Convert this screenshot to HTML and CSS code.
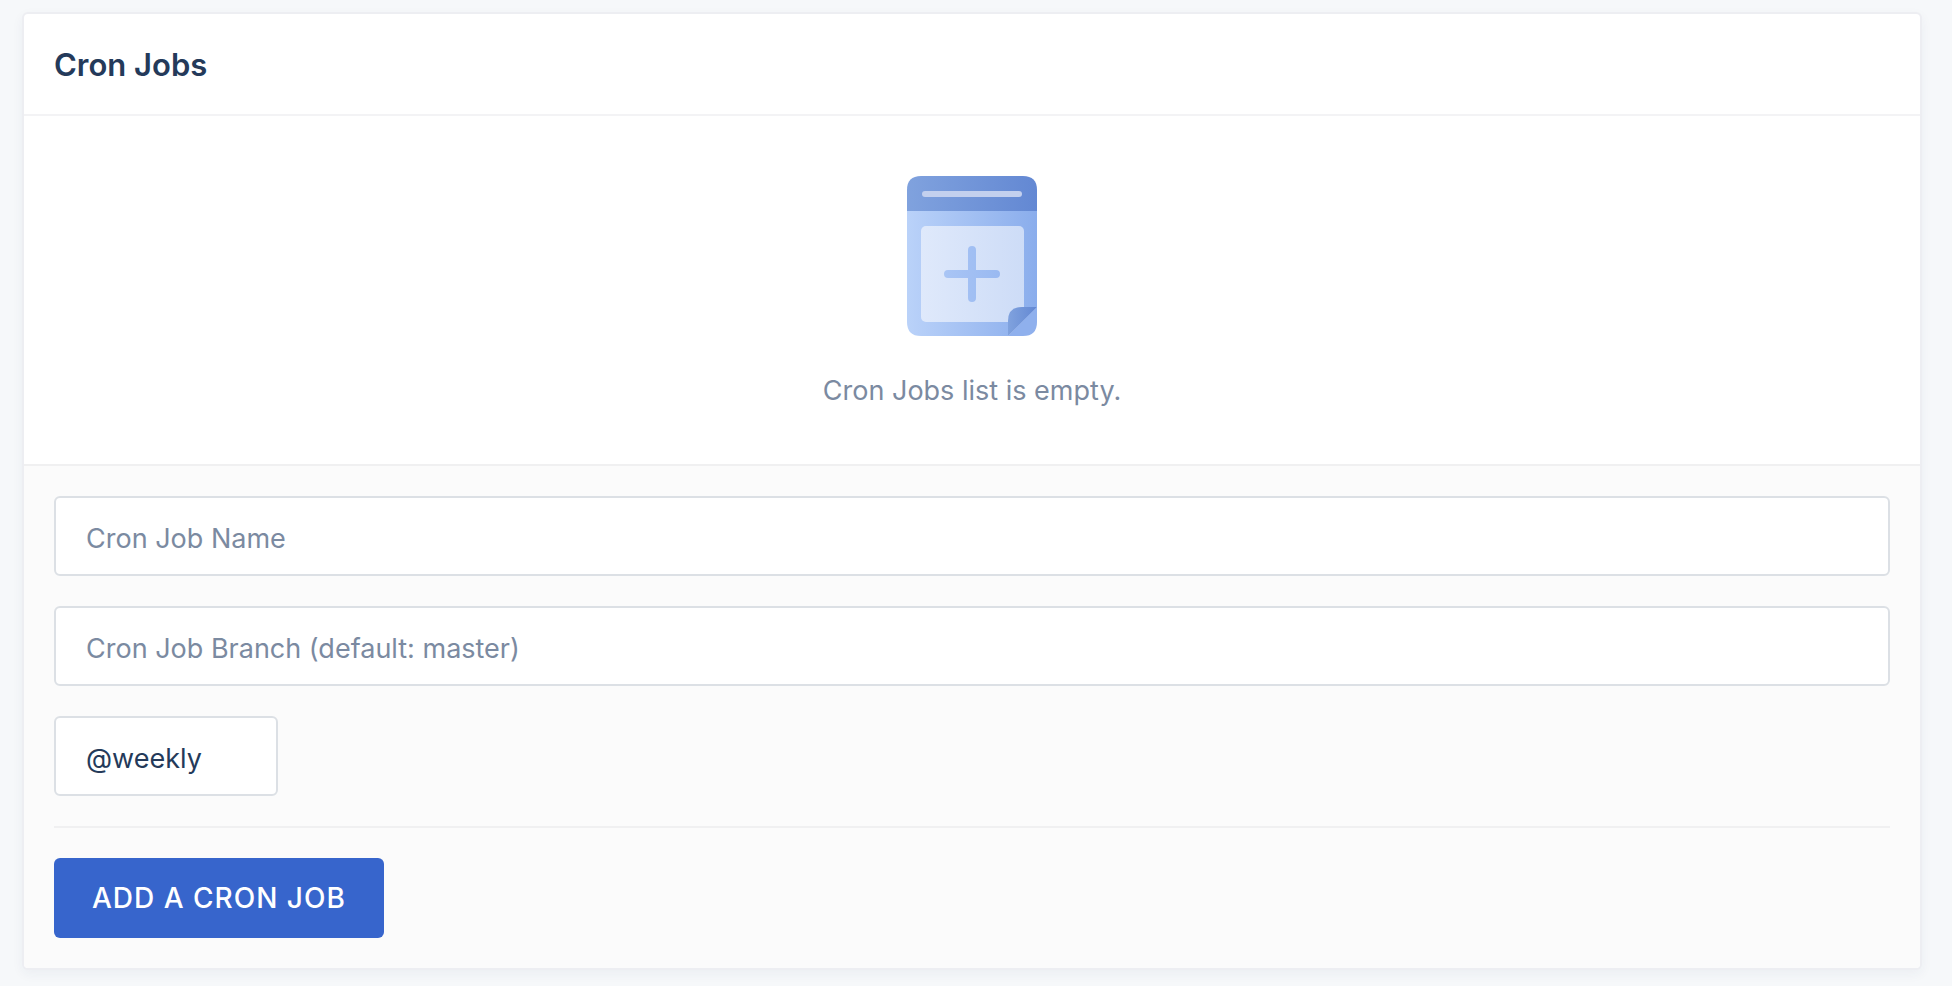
FILE: index.html
```html
<!DOCTYPE html>
<html lang="en">
<head>
<meta charset="utf-8">
<title>Cron Jobs</title>
<link rel="stylesheet" href="styles.css">
</head>
<body>
<section class="card">
  <header class="card-header">
    <h1 class="card-title">Cron Jobs</h1>
  </header>
  <div class="empty">
    <svg class="empty-icon" width="130" height="160" viewBox="0 0 130 160" aria-hidden="true">
      <defs>
        <linearGradient id="sheet"><stop offset="0" stop-color="#bad2f9"/><stop offset="1" stop-color="#8aadec"/></linearGradient>
        <linearGradient id="band"><stop offset="0" stop-color="#80a2de"/><stop offset="1" stop-color="#6388d3"/></linearGradient>
        <linearGradient id="panel"><stop offset="0" stop-color="#dfe9fb"/><stop offset="1" stop-color="#cddcf7"/></linearGradient>
        <linearGradient id="plus" gradientUnits="userSpaceOnUse" x1="37" y1="0" x2="93" y2="0"><stop offset="0" stop-color="#a9c5f5"/><stop offset="1" stop-color="#99b9f1"/></linearGradient>
      </defs>
      <path fill="url(#sheet)" d="M0 35H130V131L101 160H14Q0 160 0 146Z"/>
      <path fill="url(#band)" d="M0 35V14Q0 0 14 0H116Q130 0 130 14V35Z"/>
      <rect x="15" y="15" width="100" height="6" rx="3" fill="#c3d0ee"/>
      <rect x="14" y="50" width="103" height="96" rx="5" fill="url(#panel)"/>
      <path fill="url(#plus)" d="M61 94V74a4 4 0 0 1 8 0V94H89a4 4 0 0 1 0 8H69V122a4 4 0 0 1-8 0V102H41a4 4 0 0 1 0-8Z"/>
      <path fill="#8fb0ed" d="M130 131V146Q130 160 116 160H101Z"/>
      <path fill="url(#band)" d="M130 131L101 160V145Q101 131 115 131Z"/>
    </svg>
    <p class="empty-text">Cron Jobs list is empty.</p>
  </div>
  <form class="form">
    <input class="field" type="text" aria-label="Cron Job Name" placeholder="Cron Job Name">
    <input class="field" type="text" aria-label="Cron Job Branch" placeholder="Cron Job Branch (default: master)">
    <select class="field field-select" aria-label="Interval">
      <option>@hourly</option>
      <option>@daily</option>
      <option selected>@weekly</option>
      <option>@monthly</option>
    </select>
    <hr class="divider">
    <button class="button" type="submit">Add a Cron Job</button>
  </form>
</section>
</body>
</html>
```

FILE: styles.css
```css
* {
  box-sizing: border-box;
}

body {
  margin: 0;
  padding: 14px 32px 18px 24px;
  background: #f6f8fa;
  color: #243a5a;
  font-family: Inter, "Liberation Sans", sans-serif;
  font-size: 27px;
}

.card {
  border-radius: 4px;
  background: #fff;
  box-shadow: 0 0 0 2px #edeef2, 0 4px 12px 2px rgba(36, 58, 90, 0.05);
}

.card-header {
  padding: 30px 30px 28px;
  border-bottom: 2px solid #f3f3f5;
}

.card-title {
  margin: 0;
  font-size: 31px;
  font-weight: 600;
  line-height: 42px;
}

.empty {
  display: flex;
  flex-direction: column;
  align-items: center;
  gap: 40px;
  padding: 60px 30px 58px;
}

.empty-icon {
  display: block;
}

.empty-text {
  margin: 0;
  color: #7b8aa1;
  line-height: 30px;
}

.form {
  display: flex;
  flex-direction: column;
  align-items: flex-start;
  gap: 30px;
  padding: 30px;
  border-top: 2px solid #f0f0f1;
  border-radius: 0 0 4px 4px;
  background: #fbfbfb;
}

.field {
  width: 100%;
  height: 80px;
  padding: 4px 30px 0;
  border: 2px solid #dce0e5;
  border-radius: 6px;
  background: #fff;
  color: inherit;
  font: inherit;
}

.field::placeholder {
  color: #7b8aa1;
  opacity: 1;
}

.field-select {
  width: 224px;
  appearance: none;
}

.divider {
  width: 100%;
  margin: 0;
  border: 0;
  border-top: 2px solid #f0f0f1;
}

.button {
  height: 80px;
  padding: 0 38px;
  border: 0;
  border-radius: 6px;
  background: #3765cc;
  color: #fff;
  font: inherit;
  font-size: 28px;
  font-weight: 500;
  letter-spacing: 1px;
  text-transform: uppercase;
}
```
